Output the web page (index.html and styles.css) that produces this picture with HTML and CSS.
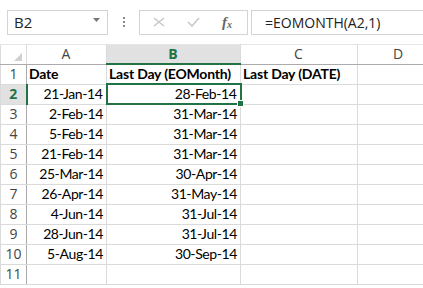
FILE: index.html
```html
<!DOCTYPE html>
<html lang="en">
<head>
    <meta charset="UTF-8">
    <title>EOMONTH</title>
    <link rel="stylesheet" href="styles.css">
</head>
<body>
    <div class="formula-bar">
        <div class="name-box">
            <span>B2</span>
            <svg class="arrow" width="7" height="4" viewBox="0 0 7 4"><path d="M0 0h7L3.5 4z" fill="#777"/></svg>
        </div>
        <div class="dots"><i></i><i></i><i></i></div>
        <div class="buttons">
            <svg width="12" height="10" viewBox="0 0 12 10"><path d="M1 1l10 8M11 1L1 9" stroke="#c8c8c8" stroke-width="1.6" fill="none"/></svg>
            <svg width="13" height="10" viewBox="0 0 13 10"><path d="M1 5l4 4 7-8" stroke="#c8c8c8" stroke-width="1.6" fill="none"/></svg>
            <span class="fx">f<sub>x</sub></span>
        </div>
        <div class="formula">=EOMONTH(A2,1)</div>
    </div>

    <table class="sheet">
        <colgroup>
            <col class="c-head"><col class="c-a"><col class="c-b"><col class="c-c"><col>
        </colgroup>
        <thead>
            <tr>
                <th class="corner"><svg width="8" height="8" viewBox="0 0 8 8"><path d="M8 0v8H0z" fill="#d0d0d0"/></svg></th>
                <th>A</th>
                <th class="active">B</th>
                <th>C</th>
                <th>D</th>
            </tr>
        </thead>
        <tbody id="rows"></tbody>
    </table>

    <script>
        const data = [
            ['21-Jan-14', '28-Feb-14'],
            ['2-Feb-14', '31-Mar-14'],
            ['5-Feb-14', '31-Mar-14'],
            ['21-Feb-14', '31-Mar-14'],
            ['25-Mar-14', '30-Apr-14'],
            ['26-Apr-14', '31-May-14'],
            ['4-Jun-14', '31-Jul-14'],
            ['28-Jun-14', '31-Jul-14'],
            ['5-Aug-14', '30-Sep-14'],
            ['', '']
        ];

        let html = `<tr>
            <th>1</th>
            <td class="bold">Date</td>
            <td class="bold">Last Day (EOMonth)</td>
            <td class="bold">Last Day (DATE)</td>
            <td></td>
        </tr>`;
        data.forEach((row, i) => {
            const n = i + 2;
            html += `<tr>
                <th class="${n === 2 ? 'active' : ''}">${n}</th>
                <td class="num">${row[0]}</td>
                <td class="num${n === 2 ? ' selected' : ''}">${row[1]}</td>
                <td></td>
                <td></td>
            </tr>`;
        });
        document.getElementById('rows').innerHTML = html;
    </script>
</body>
</html>
```
FILE: styles.css
```css
body {
    margin: 0;
    background-color: #ffffff;
    font-family: 'Lato', sans-serif;
    color: #000000;
    overflow: hidden;
}

.formula-bar {
    display: flex;
    align-items: center;
    height: 44px;
    padding: 0 0 0 7px;
    box-sizing: border-box;
}

.name-box {
    width: 101px;
    height: 25px;
    border: 1px solid #d4d4d4;
    box-sizing: border-box;
    display: flex;
    align-items: center;
    justify-content: space-between;
    padding: 0 7px 0 6px;
    font-size: 15px;
    color: #222;
    font-family: 'Open Sans', sans-serif;
}

.arrow {
    margin-top: -4px;
}

.dots {
    width: 31px;
    display: flex;
    flex-direction: column;
    align-items: center;
    gap: 2px;
}

.dots i {
    width: 2px;
    height: 2px;
    background-color: #8a8a8a;
}

.buttons {
    width: 109px;
    height: 25px;
    border: 1px solid #d4d4d4;
    box-sizing: border-box;
    display: flex;
    align-items: center;
    padding: 0 15px 0 13px;
    justify-content: space-between;
}

.fx {
    font-family: 'Liberation Serif', serif;
    font-style: italic;
    font-weight: bold;
    font-size: 15px;
    color: #666;
}

.fx sub {
    font-size: 10px;
    vertical-align: -1px;
}

.formula {
    flex: 1;
    height: 25px;
    margin-left: 3px;
    border: 1px solid #d4d4d4;
    border-right: none;
    box-sizing: border-box;
    padding-left: 13px;
    font-size: 14px;
    line-height: 23px;
    color: #222;
    font-family: 'Open Sans', sans-serif;
}

.sheet {
    border-collapse: collapse;
    table-layout: fixed;
    width: 440px;
    font-size: 14px;
}

.c-head { width: 26px; }
.c-a { width: 80px; }
.c-b { width: 134px; }
.c-c { width: 117px; }

.sheet th,
.sheet td {
    height: 20px;
    padding: 0 3px 0 2px;
    border: 1px solid #dadada;
    box-sizing: border-box;
    white-space: nowrap;
    overflow: visible;
    line-height: 18px;
}

.sheet thead th {
    height: 18px;
    background-color: #ffffff;
    color: #444;
    font-weight: normal;
    font-size: 14px;
    font-family: 'Open Sans', sans-serif;
    border-top: 1px solid #e6e6e6;
    border-bottom: 1px solid #ababab;
}

.sheet thead th.corner {
    text-align: right;
    vertical-align: bottom;
    padding: 0 4px 3px 0;
    line-height: 0;
}

.sheet tbody th {
    font-weight: normal;
    color: #444;
    font-size: 14px;
    font-family: 'Open Sans', sans-serif;
    text-align: center;
    padding: 0;
    border-right: 1px solid #ababab;
}

.sheet th.active {
    background-color: #e1e1e1;
    color: #217346;
    font-weight: bold;
}

.sheet thead th.active {
    border-bottom: 2px solid #217346;
}

.sheet tbody th.active {
    border-right: 2px solid #217346;
}

.bold {
    font-weight: bold;
    letter-spacing: -0.2px;
}

.num {
    text-align: right;
    letter-spacing: -0.4px;
}

.sheet td.selected {
    position: relative;
    border: 2px solid #217346;
}

.sheet td.selected::after {
    content: '';
    position: absolute;
    right: -4px;
    bottom: -4px;
    width: 5px;
    height: 5px;
    background-color: #217346;
    border: 1px solid #ffffff;
}
```
